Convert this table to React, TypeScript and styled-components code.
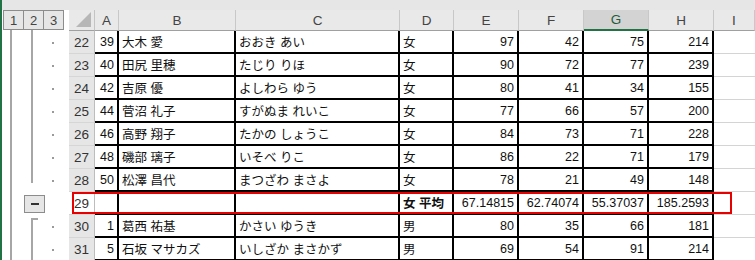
import styled, { createGlobalStyle } from 'styled-components'

const GlobalStyle = createGlobalStyle`
  html, body { margin: 0; padding: 0; background: #fff; }
  body { font-family: "Liberation Sans", "Noto Sans CJK JP", sans-serif; }
`

const COLS = '67px 26px 24px 117px 164px 54px 65px 65px 65px 65px 1fr'
const BAR = '#a6a6a6'

type OutlineKind = 'detail' | 'groupEnd' | 'summary' | 'groupStart'

interface SheetRow {
    no: number
    outline: OutlineKind
    cells: string[]
    bold?: boolean
}

const rows: SheetRow[] = [
    { no: 22, outline: 'detail', cells: ['39', '大木 愛', 'おおき あい', '女', '97', '42', '75', '214'] },
    { no: 23, outline: 'detail', cells: ['40', '田尻 里穂', 'たじり りほ', '女', '90', '72', '77', '239'] },
    { no: 24, outline: 'detail', cells: ['42', '吉原 優', 'よしわら ゆう', '女', '80', '41', '34', '155'] },
    { no: 25, outline: 'detail', cells: ['44', '菅沼 礼子', 'すがぬま れいこ', '女', '77', '66', '57', '200'] },
    { no: 26, outline: 'detail', cells: ['46', '高野 翔子', 'たかの しょうこ', '女', '84', '73', '71', '228'] },
    { no: 27, outline: 'detail', cells: ['48', '磯部 璃子', 'いそべ りこ', '女', '86', '22', '71', '179'] },
    { no: 28, outline: 'groupEnd', cells: ['50', '松澤 昌代', 'まつざわ まさよ', '女', '78', '21', '49', '148'] },
    { no: 29, outline: 'summary', bold: true, cells: ['', '', '', '女 平均', '67.14815', '62.74074', '55.37037', '185.2593'] },
    { no: 30, outline: 'groupStart', cells: ['1', '葛西 祐基', 'かさい ゆうき', '男', '80', '35', '66', '181'] },
    { no: 31, outline: 'detail', cells: ['5', '石坂 マサカズ', 'いしざか まさかず', '男', '69', '54', '91', '214'] },
]

const columns = ['A', 'B', 'C', 'D', 'E', 'F', 'G', 'H', 'I']
const rightAligned = [true, false, false, false, true, true, true, true]

const Frame = styled.div`
    position: relative;
    width: 755px;
    height: 260px;
    overflow: hidden;
    box-sizing: border-box;
    border-left: 2px solid #217346;
    background: #fff;
`

const TopStrip = styled.div`
    height: 10px;
    background: #e6e6e6;
`

const Row = styled.div<{ $h: number }>`
    display: grid;
    grid-template-columns: ${COLS};
    height: ${p => p.$h}px;
`

const OutlineHeader = styled.div`
    display: flex;
    align-items: flex-start;
    padding-left: 1px;
    background:
        linear-gradient(${BAR}, ${BAR}) 8px 20px / 2px 100% no-repeat,
        linear-gradient(${BAR}, ${BAR}) 29px 20px / 2px 100% no-repeat,
        #fff;
`

const LevelButton = styled.div`
    width: 21px;
    height: 20px;
    box-sizing: border-box;
    border: 1px solid #8c8c8c;
    margin-right: -1px;
    background: #e6e6e6;
    color: #444;
    font-size: 13px;
    display: flex;
    align-items: center;
    justify-content: center;
`

const Corner = styled.div`
    background: #e9e9e9;
    box-sizing: border-box;
    border-right: 1px solid #c4c4c4;
    border-bottom: 1px solid #a0a0a0;
    display: flex;
    align-items: flex-end;
    justify-content: flex-end;
    padding: 0 3px 3px 0;
`

const CornerTriangle = styled.div`
    width: 0;
    height: 0;
    border-left: 15px solid transparent;
    border-bottom: 15px solid #b7b7b7;
`

const ColHead = styled.div<{ $selected?: boolean }>`
    box-sizing: border-box;
    background: ${p => (p.$selected ? '#d3d3d3' : '#e9e9e9')};
    border-right: 1px solid #c8c8c8;
    border-bottom: ${p => (p.$selected ? '2px solid #217346' : '1px solid #a0a0a0')};
    color: ${p => (p.$selected ? '#1f5c39' : '#444')};
    font-size: 13.5px;
    display: flex;
    align-items: center;
    justify-content: center;
`

const level1 = `linear-gradient(${BAR}, ${BAR}) 8px 0 / 2px 100% no-repeat`
const level2Full = `linear-gradient(${BAR}, ${BAR}) 29px 0 / 2px 100% no-repeat`
const dot = `linear-gradient(#9a9a9a, #9a9a9a) 50px 11px / 2px 2px no-repeat`

const outlineBg: Record<OutlineKind, string> = {
    detail: [dot, level2Full, level1].join(', '),
    groupEnd: [dot, `linear-gradient(${BAR}, ${BAR}) 29px 0 / 2px 14px no-repeat`, level1].join(', '),
    summary: level1,
    groupStart: [
        dot,
        `linear-gradient(${BAR}, ${BAR}) 29px 3px / 7px 2px no-repeat`,
        `linear-gradient(${BAR}, ${BAR}) 29px 3px / 2px 100% no-repeat`,
        level1,
    ].join(', '),
}

const OutlineCell = styled.div<{ $kind: OutlineKind }>`
    background: ${p => outlineBg[p.$kind]}, #fff;
    padding: 3px 0 0 22px;
    box-sizing: border-box;
`

const MinusButton = styled.div`
    width: 21px;
    height: 18px;
    box-sizing: border-box;
    border: 1px solid #8c8c8c;
    background: #e6e6e6;
    display: flex;
    align-items: center;
    justify-content: center;
`

const MinusBar = styled.div`
    width: 8px;
    height: 2px;
    background: #333;
`

const RowHead = styled.div<{ $light?: boolean }>`
    box-sizing: border-box;
    background: ${p => (p.$light ? '#fff' : '#e6e6e6')};
    border-right: 1px solid #bdbdbd;
    border-bottom: 1px solid #d6d6d6;
    color: #333;
    font-size: 13.5px;
    display: flex;
    align-items: center;
    justify-content: center;
`

const Cell = styled.div<{ $right?: boolean; $bold?: boolean }>`
    box-sizing: border-box;
    border-right: 2px solid #000;
    border-bottom: 2px solid #000;
    padding: 0 3px;
    display: flex;
    align-items: center;
    justify-content: ${p => (p.$right ? 'flex-end' : 'flex-start')};
    font-size: 12.5px;
    font-weight: ${p => (p.$bold ? 700 : 400)};
    color: #111;
    white-space: nowrap;
    overflow: hidden;
`

const BlankCell = styled.div`
    box-sizing: border-box;
    border-bottom: 1px solid #d4d4d4;
`

const Highlight = styled.div`
    position: absolute;
    left: 70px;
    top: 192px;
    width: 660px;
    height: 22px;
    box-sizing: border-box;
    border: 2px solid #e60000;
    pointer-events: none;
`

export default function App() {
    return (
        <>
            <GlobalStyle />
            <Frame>
                <TopStrip />
                <Row $h={21}>
                    <OutlineHeader>
                        <LevelButton>1</LevelButton>
                        <LevelButton>2</LevelButton>
                        <LevelButton>3</LevelButton>
                    </OutlineHeader>
                    <Corner>
                        <CornerTriangle />
                    </Corner>
                    {columns.map(c => (
                        <ColHead key={c} $selected={c === 'G'}>{c}</ColHead>
                    ))}
                </Row>
                {rows.map(r => (
                    <Row $h={23} key={r.no}>
                        <OutlineCell $kind={r.outline}>
                            {r.outline === 'summary' && (
                                <MinusButton>
                                    <MinusBar />
                                </MinusButton>
                            )}
                        </OutlineCell>
                        <RowHead $light={r.outline === 'summary'}>{r.no}</RowHead>
                        {r.cells.map((v, i) => (
                            <Cell key={i} $right={rightAligned[i]} $bold={r.bold && i === 3}>{v}</Cell>
                        ))}
                        <BlankCell />
                    </Row>
                ))}
                <Highlight />
            </Frame>
        </>
    )
}
